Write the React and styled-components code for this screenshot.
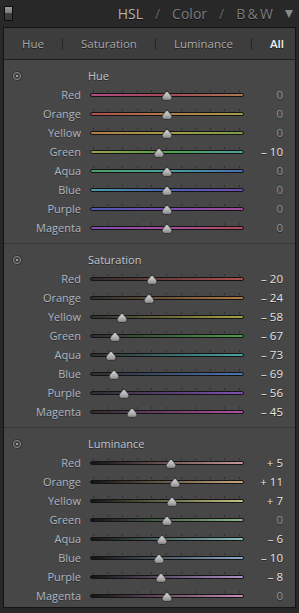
import React from 'react';
import styled, { createGlobalStyle } from 'styled-components';

const GlobalStyle = createGlobalStyle`
  html, body {
    margin: 0;
    padding: 0;
    background: #282828;
    font-family: "Open Sans", "Liberation Sans", sans-serif;
  }
`;

const Page = styled.div`
  width: 299px;
  height: 613px;
  background: #282828;
  overflow: hidden;
`;

const Header = styled.div`
  height: 27px;
  display: flex;
  align-items: center;
  padding: 0 6px 0 4px;
  box-sizing: border-box;
`;

const Toggle = styled.div`
  width: 7px;
  height: 13px;
  border: 1px solid #0e0e0e;
  background: linear-gradient(#9a9a9a, #7a7a7a 50%, #3e3e3e 50%, #3a3a3a);
`;

const Title = styled.div`
  margin-left: auto;
  display: flex;
  align-items: center;
  font-size: 14px;
  color: #7c7c7c;
  text-shadow: 0 1px 0 #111;
`;

const TitleItem = styled.span`
  color: ${(p) => (p.active ? '#b4b4b4' : '#7c7c7c')};
`;

const Slash = styled.span`
  margin: 0 12px;
  color: #6a6a6a;
`;

const Caret = styled.div`
  margin-left: 12px;
  width: 0;
  height: 0;
  border-left: 4.5px solid transparent;
  border-right: 4.5px solid transparent;
  border-top: 8px solid #8a8a8a;
`;

const Panel = styled.div`
  margin: 0 3px;
  border: 1px solid #141414;
  background: #474747;
`;

const Tabs = styled.div`
  height: 31px;
  display: flex;
  align-items: center;
  gap: 18px;
  padding-left: 18px;
  background: #3d3d3d;
  border-bottom: 1px solid #1f1f1f;
  font-size: 11.5px;
`;

const Tab = styled.span`
  color: ${(p) => (p.active ? '#f4f4f4' : '#a8a8a8')};
  font-weight: ${(p) => (p.active ? 600 : 400)};
  text-shadow: 0 1px 0 #1c1c1c;
`;

const TabSep = styled.span`
  width: 1px;
  height: 12px;
  background: #262626;
`;

const Section = styled.div`
  padding: 6px 0 ${(p) => (p.last ? '2px' : '6px')};
  border-top: ${(p) => (p.first ? 'none' : '1px solid #383838')};
`;

const Row = styled.div`
  height: 19px;
  display: grid;
  grid-template-columns: 77px 154px 30px;
  column-gap: 9px;
  align-items: center;
`;

const SectionIcon = styled.div`
  justify-self: start;
  margin-left: 9px;
  width: 6px;
  height: 6px;
  border-radius: 50%;
  border: 1px solid #8c8c8c;
  background: radial-gradient(circle, #9a9a9a 0 1.3px, #3a3a3a 1.6px);
  box-shadow: 0 0 0 1px #333;
`;

const SectionTitle = styled.div`
  margin-left: -2px;
  font-size: 11px;
  color: #c0c4ca;
  text-shadow: 0 1px 0 #2a2a2a;
`;

const Label = styled.div`
  text-align: right;
  font-size: 11px;
  color: #b0b7c1;
  text-shadow: 0 1px 0 #2e2e2e;
`;

const Value = styled.div`
  text-align: right;
  white-space: nowrap;
  font-size: 11.5px;
  color: ${(p) => (p.zero ? '#8896a6' : '#e4e4e4')};
  text-shadow: 0 1px 0 #2a2a2a;
`;

const SliderBox = styled.div`
  position: relative;
  height: 19px;
`;

const Ticks = styled.div`
  position: absolute;
  left: 3px;
  right: 4px;
  top: 5px;
  height: 3px;
  display: flex;
  justify-content: space-between;
`;

const Tick = styled.span`
  width: 1px;
  height: 2px;
  background: #2e2e2e;
`;

const Track = styled.div`
  position: absolute;
  left: 0;
  right: 0;
  top: 8px;
  height: 2px;
  border: 1px solid #141414;
  border-radius: 2px;
  background: ${(p) => p.bg};
`;

const ThumbSvg = styled.svg`
  position: absolute;
  top: 5px;
  width: 12px;
  height: 11px;
  margin-left: -6px;
`;

function Thumb({ value }) {
  const pct = (value + 100) / 2;
  return (
    <ThumbSvg viewBox="0 0 12 11" style={{ left: `${pct}%` }}>
      <defs>
        <linearGradient id="tg" x1="0" y1="0" x2="0" y2="1">
          <stop offset="0" stopColor="#e0e0e0" />
          <stop offset="0.55" stopColor="#b4b4b4" />
          <stop offset="1" stopColor="#858585" />
        </linearGradient>
      </defs>
      <path
        d="M6 0.6 C7 3 11 5.3 11 7.8 Q11 10.4 8.4 10.4 L3.6 10.4 Q1 10.4 1 7.8 C1 5.3 5 3 6 0.6 Z"
        fill="url(#tg)"
        stroke="#2a2a2a"
        strokeWidth="0.9"
      />
    </ThumbSvg>
  );
}

function Slider({ value, bg }) {
  return (
    <SliderBox>
      <Ticks>
        {Array.from({ length: 11 }).map((_, i) => (
          <Tick key={i} />
        ))}
      </Ticks>
      <Track bg={bg} />
      <Thumb value={value} />
    </SliderBox>
  );
}

const fmt = (v) => (v === 0 ? '0' : v < 0 ? `\u2013 ${-v}` : `+ ${v}`);

const names = ['Red', 'Orange', 'Yellow', 'Green', 'Aqua', 'Blue', 'Purple', 'Magenta'];

const hueBg = [
  'linear-gradient(90deg, #b04a84, #a84858 50%, #a87a52)',
  'linear-gradient(90deg, #b04c4c, #b07c4a 50%, #a49c48)',
  'linear-gradient(90deg, #b07c48, #a49c48 50%, #7c9e48)',
  'linear-gradient(90deg, #9ca448, #54a04e 50%, #48a09a)',
  'linear-gradient(90deg, #4ea068, #48a0a0 50%, #4a6cb4)',
  'linear-gradient(90deg, #489ca8, #4a64b8 50%, #6c4cb0)',
  'linear-gradient(90deg, #4c5ab4, #7a4cb4 50%, #a84c9c)',
  'linear-gradient(90deg, #7e4cb4, #a84c9c 50%, #b04c58)',
];

const satColors = ['#b44e4e', '#b47c44', '#a8a446', '#4e9c4e', '#48a4a4', '#4c74b4', '#8050b4', '#b050a0'];
const lumColors = ['#c89898', '#c8a880', '#c2c282', '#8cba8c', '#8cc0c0', '#8ca8c8', '#b090c8', '#c88eb8'];

const sections = [
  {
    title: 'Hue',
    values: [0, 0, 0, -10, 0, 0, 0, 0],
    bg: (i) => hueBg[i],
  },
  {
    title: 'Saturation',
    values: [-20, -24, -58, -67, -73, -69, -56, -45],
    bg: (i) => `linear-gradient(90deg, #2e2e2e, ${satColors[i]})`,
  },
  {
    title: 'Luminance',
    values: [5, 11, 7, 0, -6, -10, -8, 0],
    bg: (i) => `linear-gradient(90deg, #141414, ${lumColors[i]})`,
  },
];

export default function App() {
  return (
    <Page>
      <GlobalStyle />
      <Header>
        <Toggle />
        <Title>
          <TitleItem active>HSL</TitleItem>
          <Slash>/</Slash>
          <TitleItem>Color</TitleItem>
          <Slash>/</Slash>
          <TitleItem>B&thinsp;&amp;&thinsp;W</TitleItem>
        </Title>
        <Caret />
      </Header>
      <Panel>
        <Tabs>
          <Tab>Hue</Tab>
          <TabSep />
          <Tab>Saturation</Tab>
          <TabSep />
          <Tab>Luminance</Tab>
          <TabSep />
          <Tab active>All</Tab>
        </Tabs>
        {sections.map((s, si) => (
          <Section key={s.title} first={si === 0} last={si === sections.length - 1}>
            <Row>
              <SectionIcon />
              <SectionTitle>{s.title}</SectionTitle>
            </Row>
            {names.map((n, i) => (
              <Row key={n}>
                <Label>{n}</Label>
                <Slider value={s.values[i]} bg={s.bg(i)} />
                <Value zero={s.values[i] === 0}>{fmt(s.values[i])}</Value>
              </Row>
            ))}
          </Section>
        ))}
      </Panel>
    </Page>
  );
}
